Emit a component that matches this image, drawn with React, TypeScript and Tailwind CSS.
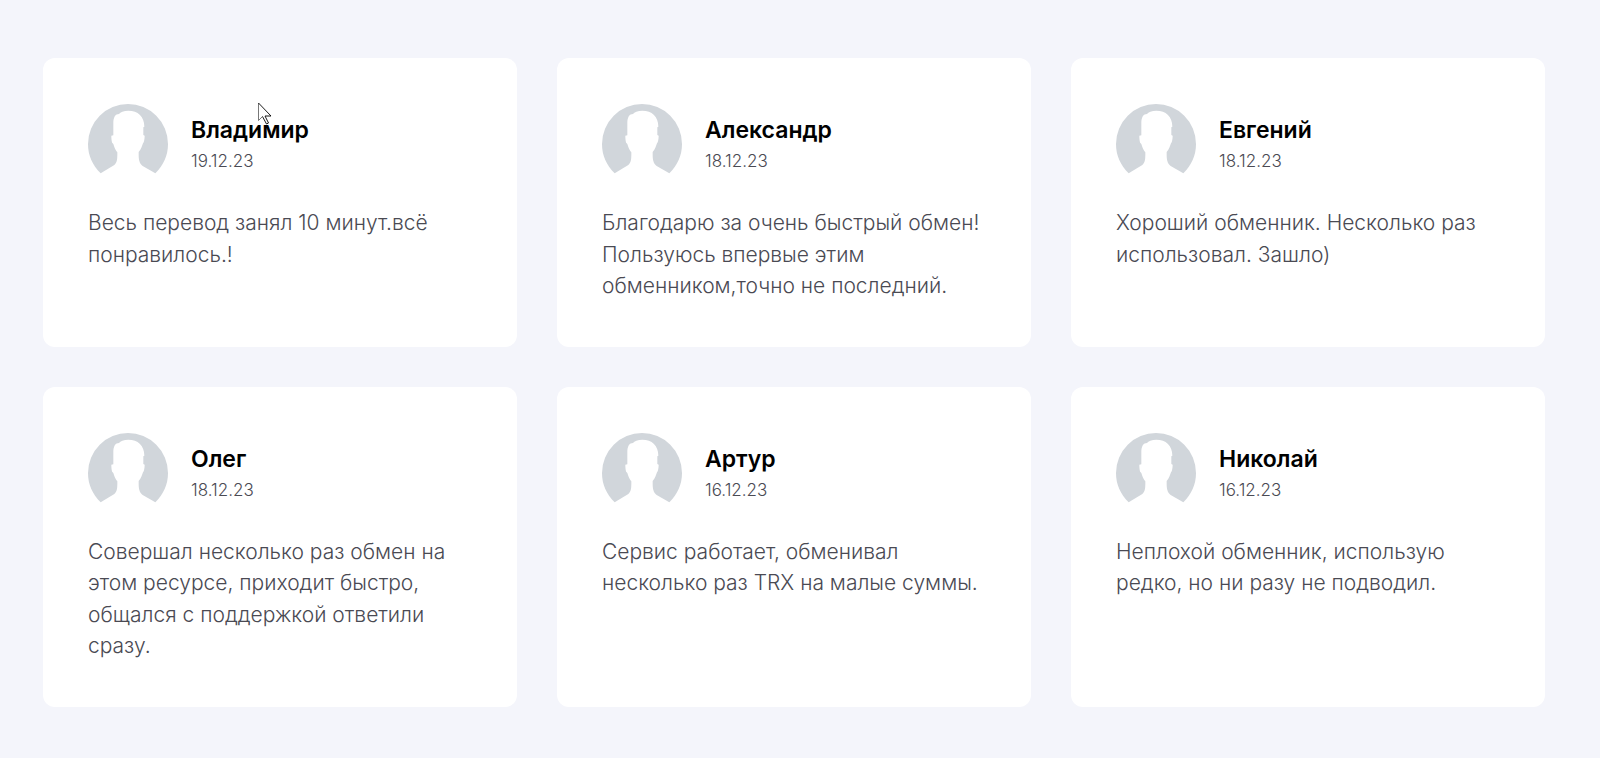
interface IReview {
  name: string;
  date: string;
  text: string;
}

const reviews: IReview[] = [
  { name: "Владимир", date: "19.12.23", text: "Весь перевод занял 10 минут.всё понравилось.!" },
  { name: "Александр", date: "18.12.23", text: "Благодарю за очень быстрый обмен! Пользуюсь впервые этим обменником,точно не последний." },
  { name: "Евгений", date: "18.12.23", text: "Хороший обменник. Несколько раз использовал. Зашло)" },
  { name: "Олег", date: "18.12.23", text: "Совершал несколько раз обмен на этом ресурсе, приходит быстро, общался с поддержкой ответили сразу." },
  { name: "Артур", date: "16.12.23", text: "Сервис работает, обменивал несколько раз TRX на малые суммы." },
  { name: "Николай", date: "16.12.23", text: "Неплохой обменник, использую редко, но ни разу не подводил." },
];

const Avatar = () => (
  <svg viewBox="0 0 240 240" className="size-20 shrink-0" aria-hidden="true">
    <path
      fill="#d1d6db"
      d="M38 208C14 184 0 155 0 120a120 120 0 0 1 240 0c0 35-14 64-38 88l-38-22c-9-6-12-18-12-32v-10c8-8 10-18 13-26 4-4 5-17 5-23l-4-2V70l3-2C169 37 150 20 121 20c-14 0-24 5-28 10-11 0-17 10-17 27v37l-6 1c0 8 1 20 4 23 4 3 5 17 14 27v9c0 14-2 24-9 29z"
    />
  </svg>
);

const Cursor = () => (
  <svg viewBox="0 0 14 23" className="absolute -top-3 left-[67px] h-[23px] w-[14px]" aria-hidden="true">
    <path d="M.5 1v17.500l4-4 4 7.500 2-1-3.500-7h6z" fill="#fff" />
    <path d="M.5 1v17.500l4-4" fill="none" stroke="#555" strokeWidth=".8" />
    <path d="M4.500 14.500l4 7.500 2-1-3.500-7h6L.5 1" fill="none" stroke="#000" strokeWidth=".9" />
  </svg>
);

const ReviewCard = (props: { review: IReview; hovered: boolean }) => {
  const { review, hovered } = props;

  return (
    <article className="rounded-xl bg-white px-[45px] pt-[46px] pb-[45px]">
      <div className="flex items-center gap-[23px]">
        <Avatar />
        <div className="flex flex-col pt-0.5">
          <div className="relative">
            <h3 className="text-[23px] leading-8 font-semibold text-black">{review.name}</h3>
            {hovered && <Cursor />}
          </div>
          <time className="text-[17px] leading-[30px] font-light text-[#4a4a53]">{review.date}</time>
        </div>
      </div>
      <p className="mt-[23px] text-[21px] leading-normal font-light text-[#4a4a53]">{review.text}</p>
    </article>
  );
};

export default function App() {
  return (
    <main className="min-h-screen bg-[#f4f5fb] pt-[58px] pr-[55px] pb-12 pl-[43px] font-['Inter',sans-serif]">
      <div className="grid grid-cols-3 gap-10">
        {reviews.map((review, index) => (
          <ReviewCard key={review.name} review={review} hovered={index === 0} />
        ))}
      </div>
    </main>
  );
}
